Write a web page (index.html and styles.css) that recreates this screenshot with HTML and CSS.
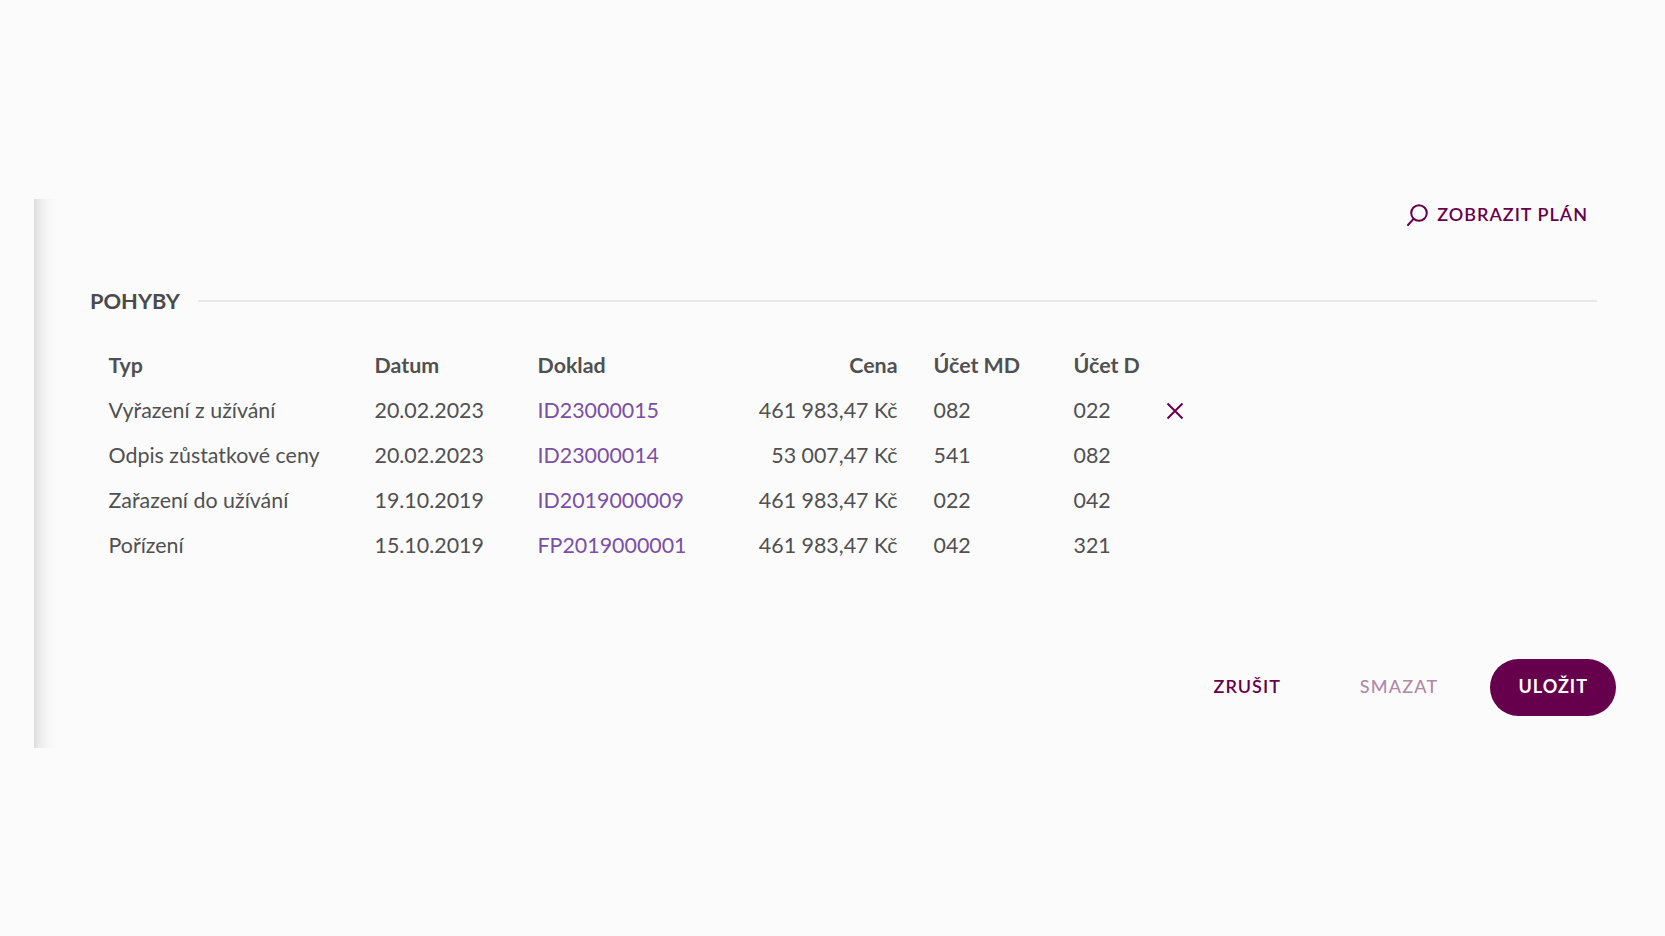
FILE: index.html
```html
<!DOCTYPE html>
<html lang="cs">

<head>
    <meta charset="UTF-8">
    <meta name="viewport" content="width=device-width, initial-scale=1.0">
    <title>Pohyby</title>
    <link rel="stylesheet" href="styles.css">
</head>

<body>

    <main class="panel">
        <div class="panel-top">
            <a class="plan-link" href="#">
                <svg class="plan-icon" viewBox="0 0 24 24" width="24" height="24" fill="none" stroke="currentColor" stroke-width="2" stroke-linecap="round">
                    <circle cx="14" cy="10" r="7.8" />
                    <path d="M8.6 15.8 3 22" />
                </svg>
                Zobrazit plán
            </a>
        </div>

        <div class="section-title">
            <h2>Pohyby</h2>
            <div class="section-line"></div>
        </div>

        <table class="moves">
            <thead>
                <tr>
                    <th class="col-type">Typ</th>
                    <th class="col-date">Datum</th>
                    <th class="col-doc">Doklad</th>
                    <th class="col-price">Cena</th>
                    <th class="col-md">Účet MD</th>
                    <th class="col-d">Účet D</th>
                    <th class="col-action"></th>
                </tr>
            </thead>
            <tbody>
                <tr>
                    <td>Vyřazení z užívání</td>
                    <td>20.02.2023</td>
                    <td><a href="#">ID23000015</a></td>
                    <td class="col-price">461 983,47 Kč</td>
                    <td>082</td>
                    <td>022</td>
                    <td class="col-action">
                        <svg class="remove-icon" viewBox="0 0 18 18" width="18" height="18" fill="none" stroke="currentColor" stroke-width="2">
                            <path d="M1.5 1.5 16.5 16.5M16.5 1.5 1.5 16.5" />
                        </svg>
                    </td>
                </tr>
                <tr>
                    <td>Odpis zůstatkové ceny</td>
                    <td>20.02.2023</td>
                    <td><a href="#">ID23000014</a></td>
                    <td class="col-price">53 007,47 Kč</td>
                    <td>541</td>
                    <td>082</td>
                    <td class="col-action"></td>
                </tr>
                <tr>
                    <td>Zařazení do užívání</td>
                    <td>19.10.2019</td>
                    <td><a href="#">ID2019000009</a></td>
                    <td class="col-price">461 983,47 Kč</td>
                    <td>022</td>
                    <td>042</td>
                    <td class="col-action"></td>
                </tr>
                <tr>
                    <td>Pořízení</td>
                    <td>15.10.2019</td>
                    <td><a href="#">FP2019000001</a></td>
                    <td class="col-price">461 983,47 Kč</td>
                    <td>042</td>
                    <td>321</td>
                    <td class="col-action"></td>
                </tr>
            </tbody>
        </table>

        <div class="actions">
            <button class="btn">Zrušit</button>
            <button class="btn btn-muted">Smazat</button>
            <button class="btn btn-primary">Uložit</button>
        </div>
    </main>

</body>

</html>
```

FILE: styles.css
```css
* {
    box-sizing: border-box;
    margin: 0;
    padding: 0;
    font-family: Lato, Arial, sans-serif;
}

body {
    background-color: #fbfbfc;
    color: #505050;
    min-height: 100vh;
    font-size: 21.4px;
    padding: 199px 34px 0 34px;
}

.panel {
    height: 549px;
    padding: 0 15px 0 56px;
    display: flex;
    flex-direction: column;
    background: linear-gradient(to right, #dedede 0, #ececec 6px, #f6f6f6 14px, #fbfbfc 22px) no-repeat left top / 30px 100%;
}

.panel-top {
    display: flex;
    justify-content: flex-end;
    padding: 2px 28px 0 0;
    height: 61px;
    align-items: flex-start;
}

.plan-link {
    display: flex;
    align-items: center;
    gap: 8px;
    color: #66004d;
    text-decoration: none;
    text-transform: uppercase;
    font-size: 18px;
    font-weight: 600;
    letter-spacing: 1px;
}

.plan-icon {
    margin-top: 2px;
}

.section-title {
    display: flex;
    align-items: center;
    gap: 18px;
    margin-top: 27px;
    padding-right: 19px;
}

.section-title h2 {
    font-size: 21.8px;
    font-weight: 700;
    text-transform: uppercase;
    line-height: 28px;
    color: #4a4a4a;
}

.section-line {
    flex: 1;
    height: 2px;
    background-color: #e8e8e8;
}

.moves {
    border-collapse: collapse;
    table-layout: fixed;
    width: 1125px;
    margin-top: 27px;
    margin-left: 0.5px;
}

.moves th,
.moves td {
    height: 45px;
    padding: 0;
    text-align: left;
    white-space: nowrap;
}

.moves th {
    font-weight: 700;
}

.moves a {
    color: #7b4fa6;
    text-decoration: none;
}

.moves .col-type {
    width: 284px;
    padding-left: 18px;
}

.moves td:first-child {
    padding-left: 18px;
}

.col-date {
    width: 163px;
}

.col-doc {
    width: 160px;
}

.moves .col-price {
    width: 200px;
    text-align: right;
}

.moves .col-md {
    width: 176px;
    padding-left: 36px;
}

.moves td:nth-child(5) {
    padding-left: 36px;
}

.col-d {
    width: 92px;
}

.col-action {
    width: 50px;
}

.remove-icon {
    display: block;
    margin-top: 2px;
    color: #66004d;
}

.actions {
    display: flex;
    justify-content: flex-end;
    align-items: center;
    margin-top: auto;
    margin-bottom: 32px;
}

.btn {
    height: 57px;
    border: none;
    background: none;
    color: #66004d;
    text-transform: uppercase;
    font-size: 18px;
    font-weight: 600;
    letter-spacing: 1px;
    padding: 0 28px 4px 28px;
    border-radius: 29px;
    cursor: pointer;
}

.btn-muted {
    color: #b088a8;
    font-weight: 500;
    letter-spacing: 1.2px;
    margin: 0 24px 0 23px;
}

.btn-primary {
    background-color: #66004d;
    color: #ffffff;
    font-weight: 700;
}
```
